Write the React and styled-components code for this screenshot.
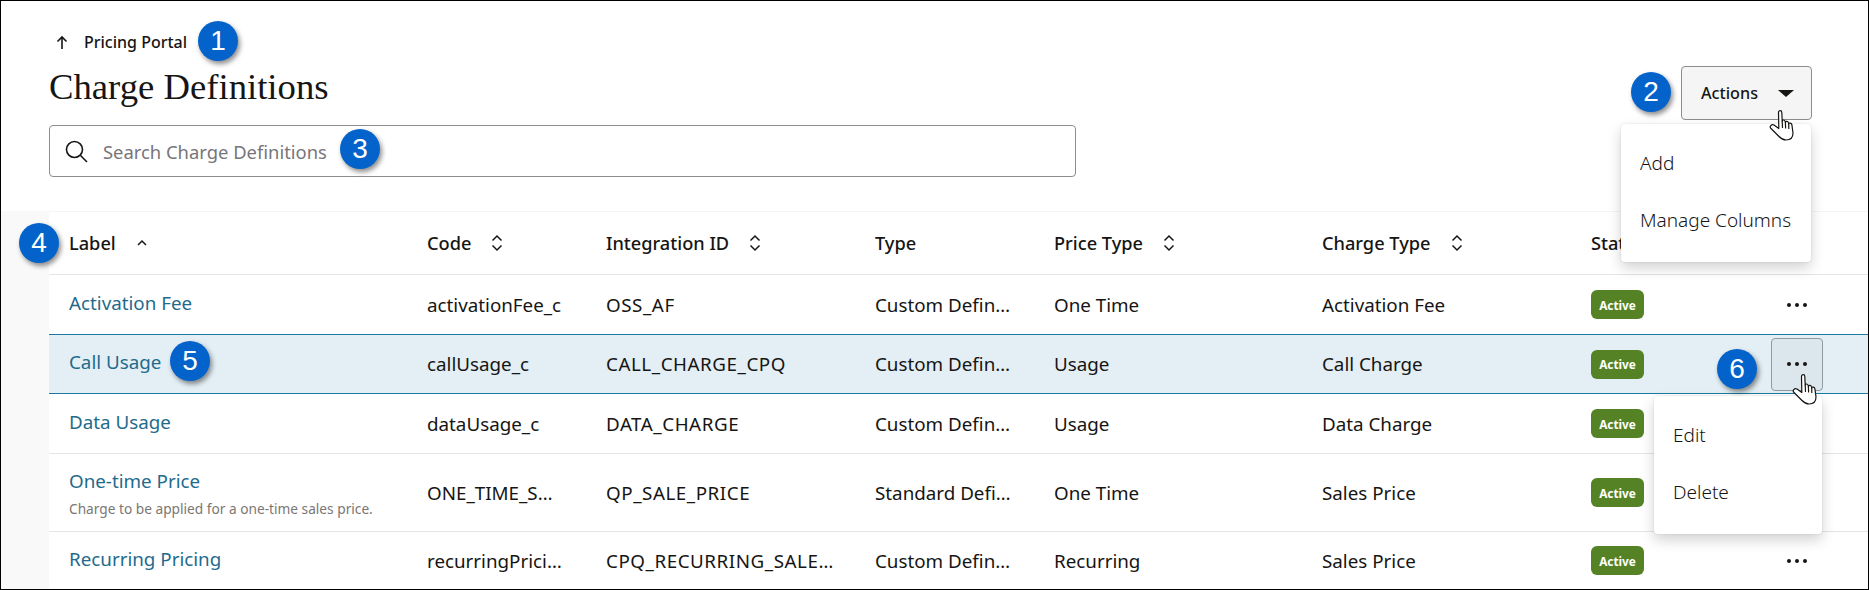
import React from "react";
import styled, { createGlobalStyle } from "styled-components";

const Global = createGlobalStyle`
  html, body { margin: 0; padding: 0; background: #fff; }
  body { font-family: "Noto Sans", "Liberation Sans", sans-serif; color: #161513; }
`;

const Page = styled.div`
  position: relative;
  box-sizing: border-box;
  width: 1869px;
  height: 590px;
  border: 1px solid #000;
  overflow: hidden;
  background: #fff;
`;

const Header = styled.header`
  display: flex;
  justify-content: space-between;
  align-items: flex-start;
  height: 210px;
  box-sizing: border-box;
  padding: 29px 56px 0 48px;
`;

const HeaderMain = styled.div`
  display: flex;
  flex-direction: column;
`;

const Breadcrumb = styled.a`
  display: flex;
  align-items: center;
  gap: 16px;
  height: 24px;
  padding-left: 7px;
  font-size: 16px;
  font-weight: 500;
  color: #161513;
`;

const Title = styled.h1`
  margin: 8px 0 0;
  height: 53px;
  font-family: "Liberation Serif", serif;
  font-size: 36.7px;
  line-height: 50px;
  font-weight: 400;
  color: #161513;
`;

const SearchBox = styled.div`
  display: flex;
  align-items: center;
  gap: 15px;
  box-sizing: border-box;
  width: 1027px;
  height: 52px;
  margin-top: 10px;
  padding-left: 15px;
  border: 1px solid #8f8d8b;
  border-radius: 4px;
`;

const Placeholder = styled.span`
  font-size: 18.4px;
  color: #77757a;
`;

const ActionsButton = styled.button`
  display: flex;
  align-items: center;
  justify-content: space-between;
  box-sizing: border-box;
  width: 131px;
  height: 54px;
  margin-top: 36px;
  padding: 0 17px 0 19px;
  background: #f5f5f5;
  border: 1px solid #8f8d8b;
  border-radius: 4px;
  font-family: inherit;
  font-size: 16.2px;
  font-weight: 500;
  color: #161513;
`;

const TableArea = styled.div`
  display: flex;
`;

const Stripe = styled.div`
  width: 48px;
  background: #f9f9f9;
`;

const Table = styled.div`
  flex: 1;
  border-top: 1px solid #f4f4f3;
`;

const Row = styled.div`
  display: grid;
  grid-template-columns: 358px 179px 269px 179px 268px 269px 180px 52px 1fr;
  align-items: center;
  box-sizing: border-box;
  height: ${(p) => p.$height}px;
  padding-left: 20px;
  font-size: 18.8px;
  border-bottom: 1px solid ${(p) => (p.$selected ? "#1b7a9e" : "#e5e5e4")};
  ${(p) => p.$selected && "background: #e3eff5; border-top: 1px solid #1b7a9e; margin-top: -1px;"}
`;

const HeadCell = styled.div`
  display: flex;
  align-items: center;
  font-size: 18.2px;
  font-weight: 500;
  white-space: nowrap;
`;

const SortIcon = styled.svg`
  width: 14px;
  height: 18px;
  margin-left: 19px;
  fill: none;
  stroke: #161513;
  stroke-width: 1.5;
`;

const Cell = styled.div`
  white-space: nowrap;
  letter-spacing: ${(p) => (p.$caps ? "0.55px" : "0")};
`;

const LabelCell = styled.div`
  padding-bottom: ${(p) => (p.$sub ? 0 : 4)}px;
`;

const LabelLink = styled.a`
  display: block;
  color: #1f6b8c;
  line-height: 24px;
`;

const Sub = styled.div`
  margin-top: 8px;
  font-size: 13.7px;
  line-height: 16px;
  color: #7a7774;
`;

const Badge = styled.span`
  display: inline-flex;
  align-items: center;
  justify-content: center;
  width: 53px;
  height: 29px;
  border-radius: 6px;
  background: #548224;
  color: #fff;
  font-size: 11.8px;
  font-weight: 700;
`;

const DotsButton = styled.div`
  display: flex;
  align-items: center;
  justify-content: center;
  gap: 4px;
  box-sizing: border-box;
  width: 52px;
  height: 53px;
  ${(p) => p.$active && "background: #dce6ed; border: 1px solid #8f9aa3; border-radius: 4px;"}
`;

const Dot = styled.i`
  width: 4px;
  height: 4px;
  border-radius: 50%;
  background: #161513;
`;

const Menu = styled.div`
  position: absolute;
  z-index: 2;
  left: ${(p) => p.$x}px;
  top: ${(p) => p.$y}px;
  width: ${(p) => p.$w}px;
  display: flex;
  flex-direction: column;
  box-sizing: border-box;
  padding: 12px 0;
  background: #fff;
  border-radius: 4px;
  box-shadow: 0 6px 14px rgba(0, 0, 0, 0.18), 0 0 2px rgba(0, 0, 0, 0.12);
`;

const MenuItem = styled.div`
  padding-left: 19px;
  height: 55px;
  line-height: 55px;
  margin-bottom: 2px;
  font-size: 19px;
  font-weight: 300;
  color: #161513;
  white-space: nowrap;
`;

const Callout = styled.div`
  position: absolute;
  z-index: 4;
  left: ${(p) => p.$x - 21}px;
  top: ${(p) => p.$y - 21}px;
  width: 40px;
  height: 40px;
  display: flex;
  align-items: center;
  justify-content: center;
  border-radius: 50%;
  background: #0463ca;
  color: #fff;
  font-family: "Liberation Sans", Arial, sans-serif;
  font-size: 28px;
  box-shadow: 2px 3px 5px rgba(0, 0, 0, 0.45);
`;

const Cursor = styled.svg`
  position: absolute;
  z-index: 5;
  left: ${(p) => p.$x - 1}px;
  top: ${(p) => p.$y - 1}px;
  width: 25px;
  height: 32px;
  fill: #fff;
  stroke: #161513;
  stroke-width: 1.2;
  stroke-linejoin: round;
  stroke-linecap: round;
`;

const Hand = ({ x, y }) => (
  <Cursor $x={x} $y={y} viewBox="0 0 25 32">
    <path d="M9.5 3.5C9.5 1 12.8 1 12.8 3.5L13.2 12C13.4 10.6 16 10.6 16.2 12.6L16.4 13.4C16.8 11.8 19.2 12 19.5 14L19.7 15C20.2 13.4 22.6 13.8 22.9 15.8L24 24C24 28 22 31 17 31C13 31 11.5 29 9 26.5L2 19.5C0 17.5 2.5 15 5 16L9.8 19.5Z" />
    <path d="M13.2 12L13.5 18.5M16.4 13.4L16.6 19M19.7 15L19.8 19.5" fill="none" />
  </Cursor>
);

const Sort = ({ dir }) => (
  <SortIcon viewBox="0 0 14 18">
    {dir === "up" && <path d="M3 11L7 7 11 11" />}
    {dir === "both" && (
      <>
        <path d="M2.5 6.5L7 2 11.5 6.5" />
        <path d="M2.5 11.5L7 16 11.5 11.5" />
      </>
    )}
  </SortIcon>
);

const Dots = ({ active }) => (
  <DotsButton $active={active}>
    <Dot />
    <Dot />
    <Dot />
  </DotsButton>
);

const columns = [
  ["Label", "up"],
  ["Code", "both"],
  ["Integration ID", "both"],
  ["Type", null],
  ["Price Type", "both"],
  ["Charge Type", "both"],
  ["Status", null],
];

const rows = [
  { label: "Activation Fee", code: "activationFee_c", id: "OSS_AF", type: "Custom Defin…", price: "One Time", charge: "Activation Fee", h: 60 },
  { label: "Call Usage", code: "callUsage_c", id: "CALL_CHARGE_CPQ", type: "Custom Defin…", price: "Usage", charge: "Call Charge", h: 60, selected: true },
  { label: "Data Usage", code: "dataUsage_c", id: "DATA_CHARGE", type: "Custom Defin…", price: "Usage", charge: "Data Charge", h: 60 },
  { label: "One-time Price", sub: "Charge to be applied for a one-time sales price.", code: "ONE_TIME_S…", id: "QP_SALE_PRICE", type: "Standard Defi…", price: "One Time", charge: "Sales Price", h: 78 },
  { label: "Recurring Pricing", code: "recurringPrici…", id: "CPQ_RECURRING_SALE…", type: "Custom Defin…", price: "Recurring", charge: "Sales Price", h: 58 },
];

export default function App() {
  return (
    <Page>
      <Global />
      <Header>
        <HeaderMain>
          <Breadcrumb>
            <svg width="12" height="15" viewBox="0 0 12 15" fill="none" stroke="#161513" strokeWidth="1.6">
              <path d="M6 14V2M1.5 6.5L6 2l4.5 4.5" />
            </svg>
            Pricing Portal
          </Breadcrumb>
          <Title>Charge Definitions</Title>
          <SearchBox>
            <svg width="23" height="23" viewBox="0 0 23 23" fill="none" stroke="#161513" strokeWidth="1.6">
              <circle cx="9.5" cy="9.5" r="8" />
              <path d="M15.3 15.3L22 22" />
            </svg>
            <Placeholder>Search Charge Definitions</Placeholder>
          </SearchBox>
        </HeaderMain>
        <ActionsButton>
          Actions
          <svg width="16" height="7" viewBox="0 0 16 7">
            <path d="M0 0H16L8 7Z" fill="#161513" />
          </svg>
        </ActionsButton>
      </Header>
      <TableArea>
        <Stripe />
        <Table>
          <Row $height={63}>
            {columns.map(([name, dir]) => (
              <HeadCell key={name}>
                {name}
                {dir && <Sort dir={dir} />}
              </HeadCell>
            ))}
          </Row>
          {rows.map((r) => (
            <Row key={r.label} $height={r.h} $selected={r.selected}>
              <LabelCell $sub={r.sub}>
                <LabelLink>{r.label}</LabelLink>
                {r.sub && <Sub>{r.sub}</Sub>}
              </LabelCell>
              <Cell>{r.code}</Cell>
              <Cell $caps>{r.id}</Cell>
              <Cell>{r.type}</Cell>
              <Cell>{r.price}</Cell>
              <Cell>{r.charge}</Cell>
              <Cell>
                <Badge>Active</Badge>
              </Cell>
              <Dots active={r.selected} />
            </Row>
          ))}
        </Table>
      </TableArea>

      <Menu $x={1620} $y={123} $w={190}>
        <MenuItem>Add</MenuItem>
        <MenuItem>Manage Columns</MenuItem>
      </Menu>
      <Menu $x={1653} $y={395} $w={168}>
        <MenuItem>Edit</MenuItem>
        <MenuItem>Delete</MenuItem>
      </Menu>

      <Callout $x={218} $y={41}>1</Callout>
      <Callout $x={1651} $y={92}>2</Callout>
      <Callout $x={360} $y={149}>3</Callout>
      <Callout $x={39} $y={243}>4</Callout>
      <Callout $x={190} $y={361}>5</Callout>
      <Callout $x={1737} $y={369}>6</Callout>

      <Hand x={1769} y={109} />
      <Hand x={1792} y={373} />
    </Page>
  );
}
